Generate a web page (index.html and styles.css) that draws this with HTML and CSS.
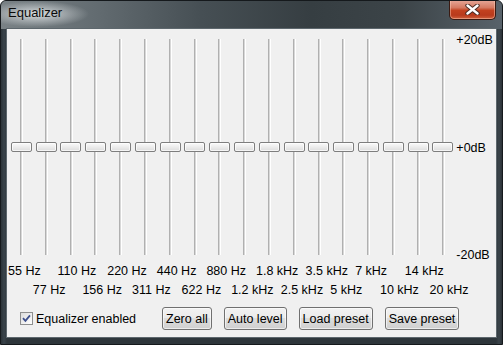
FILE: index.html
```html
<!DOCTYPE html>
<html lang="en">
<head>
    <meta charset="UTF-8">
    <title>Equalizer</title>
    <link rel="stylesheet" href="styles.css">
</head>
<body>
    <div class="window">
        <div class="titlebar">
            <span class="title">Equalizer</span>
            <button class="close" aria-label="Close">
                <svg width="15" height="11" viewBox="0 0 15 11">
                    <path d="M2.5 1.5 L12.5 9.5 M12.5 1.5 L2.5 9.5" stroke="#4a2a22" stroke-width="4.4" stroke-linecap="round"/>
                    <path d="M2.5 1.5 L12.5 9.5 M12.5 1.5 L2.5 9.5" stroke="#fff" stroke-width="2.4" stroke-linecap="round"/>
                </svg>
            </button>
        </div>
        <div class="frame">
            <div class="client">
                <div class="eq">
                    <div class="bands">
                        <div class="slider"><span class="thumb"></span></div>
                        <div class="slider"><span class="thumb"></span></div>
                        <div class="slider"><span class="thumb"></span></div>
                        <div class="slider"><span class="thumb"></span></div>
                        <div class="slider"><span class="thumb"></span></div>
                        <div class="slider"><span class="thumb"></span></div>
                        <div class="slider"><span class="thumb"></span></div>
                        <div class="slider"><span class="thumb"></span></div>
                        <div class="slider"><span class="thumb"></span></div>
                        <div class="slider"><span class="thumb"></span></div>
                        <div class="slider"><span class="thumb"></span></div>
                        <div class="slider"><span class="thumb"></span></div>
                        <div class="slider"><span class="thumb"></span></div>
                        <div class="slider"><span class="thumb"></span></div>
                        <div class="slider"><span class="thumb"></span></div>
                        <div class="slider"><span class="thumb"></span></div>
                        <div class="slider"><span class="thumb"></span></div>
                        <div class="slider"><span class="thumb"></span></div>
                    </div>
                    <div class="scale">
                        <span>+20dB</span>
                        <span>+0dB</span>
                        <span>-20dB</span>
                    </div>
                </div>

                <div class="freqs">
                    <span>55 Hz</span>
                    <span>77 Hz</span>
                    <span>110 Hz</span>
                    <span>156 Hz</span>
                    <span>220 Hz</span>
                    <span>311 Hz</span>
                    <span>440 Hz</span>
                    <span>622 Hz</span>
                    <span>880 Hz</span>
                    <span>1.2 kHz</span>
                    <span>1.8 kHz</span>
                    <span>2.5 kHz</span>
                    <span>3.5 kHz</span>
                    <span>5 kHz</span>
                    <span>7 kHz</span>
                    <span>10 kHz</span>
                    <span>14 kHz</span>
                    <span>20 kHz</span>
                </div>

                <div class="footer">
                    <label class="check">
                        <span class="box">
                            <svg width="13" height="13" viewBox="0 0 13 13">
                                <path d="M3 6.2 L5.4 8.8 L10 3.4" fill="none" stroke="#3d4f8c" stroke-width="1.8"/>
                            </svg>
                        </span>
                        Equalizer enabled
                    </label>
                    <div class="buttons">
                        <button class="btn">Zero all</button>
                        <button class="btn">Auto level</button>
                        <button class="btn">Load preset</button>
                        <button class="btn">Save preset</button>
                    </div>
                </div>
            </div>
        </div>
    </div>
</body>
</html>
```

FILE: styles.css
```css
body {
    margin: 0;
    background: #ffffff;
    font-family: "Liberation Sans", Arial, sans-serif;
    font-size: 12.5px;
    color: #000;
}

.window {
    width: 503px;
    height: 345px;
    box-sizing: border-box;
    border: 1px solid #15191c;
    border-radius: 6px 6px 0 0;
    background: #2f373b;
    display: flex;
    flex-direction: column;
    overflow: hidden;
}

/* title bar */
.titlebar {
    height: 28px;
    flex: none;
    display: flex;
    align-items: flex-start;
    padding: 0 6px;
    background:
        radial-gradient(ellipse 52px 13px at 36px 13px, rgba(226, 230, 232, 0.9), rgba(226, 230, 232, 0) 100%),
        linear-gradient(to right, #7a8286 0%, #646d72 18%, #464f54 40%, #363e42 62%, #3c4448 80%, #58626a 100%);
}

    .titlebar .title {
        padding: 4px 0 0 1px;
        font-size: 13px;
        line-height: 16px;
        color: #0a0a0a;
    }

.close {
    margin: -1px 0 0 auto;
    width: 47px;
    height: 20px;
    padding: 0;
    border: 1px solid #3a1a12;
    border-top: none;
    border-radius: 0 0 5px 5px;
    background: linear-gradient(to bottom, #e7a99a 0%, #d57a62 40%, #c2411f 55%, #b83a1c 80%, #d0623e 100%);
    box-shadow: inset 0 0 0 1px rgba(255, 210, 190, 0.45);
    display: flex;
    align-items: center;
    justify-content: center;
}

/* window frame + client */
.frame {
    flex: 1;
    display: flex;
    padding: 0 6px 7px;
    background: linear-gradient(to right, #2b3338, #39434a 3px, #2e363b 6px, #2e363b 495px, #3b444a 498px, #2a3136);
}

.client {
    flex: 1;
    display: flex;
    flex-direction: column;
    padding: 0 0 7px 1px;
    background: #f0f0f0;
    box-shadow: 0 0 0 1px #5d676d;
}

/* sliders */
.eq {
    height: 233px;
    display: flex;
}

.bands {
    display: flex;
    margin-left: 1px;
    padding-top: 10px;
}

.slider {
    width: 24.8px;
    height: 216px;
    display: flex;
    align-items: center;
    justify-content: center;
    background: linear-gradient(to right,
        transparent 11px, #b0b0b0 11px, #b0b0b0 12px,
        #d8d8d8 12px, #d8d8d8 13px,
        #ffffff 13px, #ffffff 14px, transparent 14px);
}

.thumb {
    width: 21px;
    height: 10px;
    box-sizing: border-box;
    border: 1px solid #7e7e7e;
    border-radius: 2px;
    background: linear-gradient(to bottom, #fbfbfb 0%, #ececec 50%, #dcdcdc 100%);
    box-shadow: inset 0 0 0 1px rgba(255, 255, 255, 0.7);
}

.scale {
    margin-left: 1px;
    padding-top: 4px;
    display: flex;
    flex-direction: column;
    justify-content: space-between;
    line-height: 14px;
}

/* frequency labels */
.freqs {
    display: flex;
    align-items: flex-start;
    margin-top: 2px;
    height: 33px;
    line-height: 14px;
}

    .freqs span {
        width: 24.8px;
        flex: none;
        white-space: nowrap;
    }

    .freqs span:nth-child(even) {
        margin-top: 19px;
    }

/* footer */
.footer {
    margin-top: 10px;
    display: flex;
    align-items: center;
    padding-left: 12px;
}

.check {
    width: 142px;
    display: flex;
    align-items: center;
    gap: 3px;
    line-height: 14px;
}

    .check .box {
        width: 13px;
        height: 13px;
        box-sizing: border-box;
        border: 1px solid #8e8f8f;
        background: linear-gradient(135deg, #dcdcdc, #ffffff);
        display: flex;
    }

        .check .box svg {
            margin: -1px;
        }

.buttons {
    display: flex;
    gap: 12px;
}

.btn {
    height: 23px;
    padding: 0 3px;
    font-family: inherit;
    font-size: 12.5px;
    color: #000;
    border: 1px solid #707070;
    border-radius: 3px;
    background: linear-gradient(to bottom, #f2f2f2 0%, #ebebeb 45%, #dddddd 50%, #cfcfcf 100%);
    box-shadow: inset 0 0 0 1px rgba(255, 255, 255, 0.6);
}
```
